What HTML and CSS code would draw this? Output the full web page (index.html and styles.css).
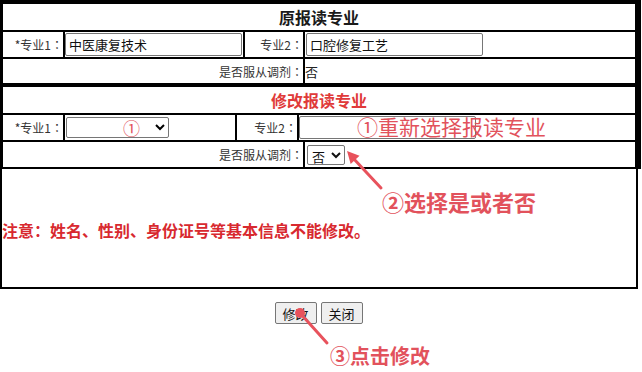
FILE: index.html
```html
<!DOCTYPE html>
<html lang="zh">
<head>
<meta charset="utf-8">
<title>修改报读专业</title>
<link rel="stylesheet" href="styles.css">
</head>
<body>
<div class="page">
  <div class="sec">
    <div class="row title">原报读专业</div>
    <div class="row r-a">
      <div class="lbl c1">*专业1<span class="colon">：</span></div>
      <div class="c2"><input class="txt" type="text" value="中医康复技术"></div>
      <div class="lbl c3">专业2<span class="colon">：</span></div>
      <div class="c4"><input class="txt txt2" type="text" value="口腔修复工艺"></div>
    </div>
    <div class="row r-b last">
      <div class="lbl c1">是否服从调剂<span class="colon">：</span></div>
      <div class="c4 plain">否</div>
    </div>
  </div>
  <div class="sec">
    <div class="row title red">修改报读专业</div>
    <div class="row r-c">
      <div class="lbl c1">*专业1<span class="colon">：</span></div>
      <div class="c2"><select class="sel1"><option></option></select></div>
      <div class="lbl c3">专业2<span class="colon">：</span></div>
      <div class="c4"><input class="txt txt3" type="text" value=""></div>
    </div>
    <div class="row r-b">
      <div class="lbl c1">是否服从调剂<span class="colon">：</span></div>
      <div class="c4"><select class="sel2"><option>否</option></select></div>
    </div>
  </div>
  <div class="note">注意<span class="colon">：</span>姓名、性别、身份证号等基本信息不能修改。</div>
  <div class="actions">
    <button class="btn" type="button">修改</button>
    <button class="btn" type="button">关闭</button>
  </div>

  <span class="ann ann-c1">①</span>
  <span class="ann ann-1">①重新选择报读专业</span>
  <span class="ann ann-2">②选择是或者否</span>
  <span class="ann ann-3">③点击修改</span>
  <svg class="arrows" width="642" height="372" viewBox="0 0 642 372">
    <line x1="381" y1="188" x2="353" y2="158" stroke="#e8525c" stroke-width="3" stroke-linecap="round"/>
    <polygon points="347,151 359.5,155.7 350.7,163.9" fill="#e8525c"/>
    <circle cx="300" cy="313" r="5" fill="#e8525c"/>
    <line x1="300" y1="313" x2="327" y2="343" stroke="#e8525c" stroke-width="3" stroke-linecap="round"/>
  </svg>
</div>
</body>
</html>
```
FILE: styles.css
```css
* { box-sizing: border-box; }
html, body { margin: 0; padding: 0; background: #fff; }
body {
  font-family: "Noto Sans CJK SC", "Noto Sans", sans-serif;
  font-size: 12px;
  color: #222;
}
.page { position: relative; width: 642px; height: 372px; overflow: hidden; }

.colon { font-family: "Noto Sans CJK JP", "Noto Sans CJK SC", sans-serif; }

.sec {
  width: 641px;
  border-left: 3px solid #000;
  border-right: 6px solid #000;
}
.sec:first-child { border-top: 4px solid #000; }

.row { border-bottom: 2px solid #000; display: flex; align-items: stretch; }
.row.last { border-bottom-width: 4px; }
.title {
  height: 28px;
  justify-content: center;
  align-items: center;
  font-size: 16px;
  font-weight: bold;
  color: #1a1a1a;
}
.title.red { color: #e03a3a; }

.lbl {
  text-align: right;
  display: flex; align-items: center; justify-content: flex-end;
  border-right: 2px solid #000;
  color: #333;
  white-space: nowrap;
}
.c2, .c4 { display: flex; align-items: center; }
.c2 { border-right: 2px solid #000; }

.r-a { height: 27px; }
.r-a .c1 { width: 62px; }
.r-a .c2 { width: 180px; }
.r-a .c3 { width: 60px; }
.r-a .c4 { flex: 1; padding-left: 1px; }

.r-b { height: 27px; }
.r-b.last { height: 28px; }
.r-b .c1 { width: 302px; }
.r-b .c4 { flex: 1; padding-left: 1px; }
.plain { font-size: 13px; padding-left: 0 !important; color: #222; }

.r-c { height: 27px; }
.r-c .c1 { width: 62px; }
.r-c .c2 { width: 172px; padding-left: 1px; }
.r-c .c3 { width: 62px; }
.r-c .c4 { flex: 1; padding-left: 0; }

.txt {
  width: 177px; height: 23px; margin: 0;
  border: 1px solid #767676; border-radius: 2px;
  font-family: inherit; font-size: 13px; color: #111;
  padding: 0 3px;
}
.sel1 {
  width: 103px; height: 21px; margin: 0;
  font-family: inherit; font-size: 13px;
  border: 1px solid #767676; border-radius: 2px; background: #fff;
}
.sel2 {
  width: 38px; height: 20px; margin: 0 0 0 1px;
  font-family: inherit; font-size: 13px; color: #111;
  border: 1px solid #767676; border-radius: 2px; background: #fff;
  padding: 0;
}

.note {
  width: 638px;
  height: 120px;
  border-left: 2px solid #000;
  border-right: 2px solid #000;
  border-bottom: 2px solid #000;
  padding-top: 51px;
  line-height: 20px;
  font-size: 16px;
  font-weight: bold;
  color: #d8292f;
  white-space: nowrap;
}

.actions {
  display: flex; justify-content: center; gap: 4px;
  margin-top: 13px;
  padding-right: 5px;
}
.btn {
  width: 42px; height: 22px; padding: 0;
  font-family: inherit; font-size: 13px; color: #111;
  background: #efefef; border: 1px solid #767676; border-radius: 2px;
}

.ann { position: absolute; color: #e2525c; white-space: nowrap; line-height: 1; }
.ann-c1 { left: 123px; top: 119px; font-size: 17px; }
.ann-1 { left: 357px; top: 116px; font-size: 21px; }
.ann-2 { left: 382px; top: 190px; font-size: 22px; font-weight: bold; }
.ann-3 { left: 330px; top: 346px; font-size: 20px; font-weight: bold; }
.arrows { position: absolute; left: 0; top: 0; pointer-events: none; }
```
